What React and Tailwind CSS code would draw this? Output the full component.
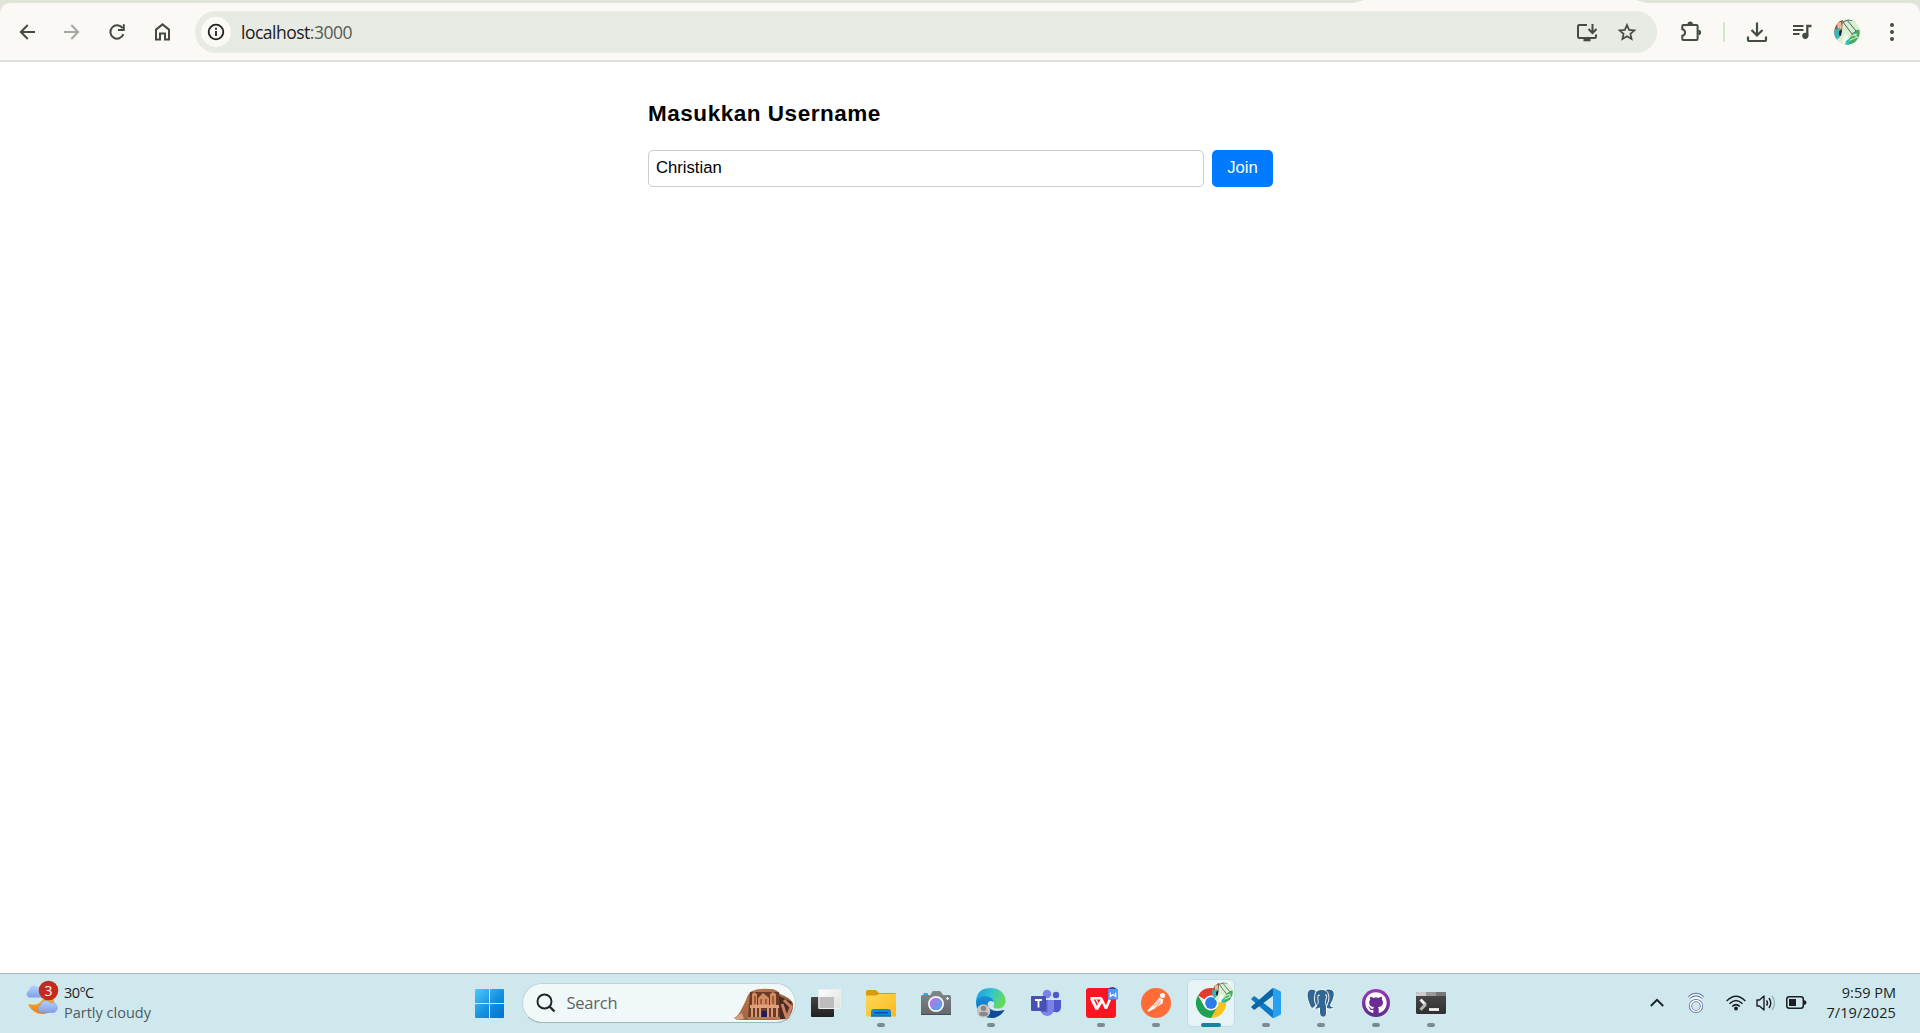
import React from "react";
import { FaGithub } from "react-icons/fa";

const INK = "#434b43";

function Back({ color = INK, flip = false }) {
  return (
    <svg width="16" height="16" viewBox="0 0 16 16" fill="none" stroke={color} strokeWidth="2" className={flip ? "-scale-x-100" : ""}>
      <path d="M16 8H2.200M8.700 1L1.900 8l6.800 7" />
    </svg>
  );
}

function Reload() {
  return (
    <svg width="18" height="18" viewBox="0 0 18 18" fill="none" stroke={INK} strokeWidth="2">
      <path d="M15.400 11.200A6.700 6.700 0 1 1 14.600 5.100" />
      <path d="M15.800 1.200V7H10" />
    </svg>
  );
}

function Home() {
  return (
    <svg width="18" height="20" viewBox="0 0 18 20" fill="none" stroke={INK} strokeWidth="2">
      <path d="M3 7.600L9.500 2.400l6.500 5.200V17.500H12V11.500H7V17.500H3Z" />
    </svg>
  );
}

function InstallApp() {
  return (
    <svg width="22" height="20" viewBox="0 0 22 20" fill="none" stroke={INK} strokeWidth="2">
      <path d="M11 3H3.200Q2 3 2 4.200V14.800Q2 16 3.200 16H18.800Q20 16 20 14.800V12.500" />
      <path d="M16.500 2V10.500M12.500 7L16.500 11L20.500 7" />
      <path d="M7.500 18H14.500" strokeWidth="2.600" />
    </svg>
  );
}

function Star() {
  return (
    <svg width="20" height="20" viewBox="0 0 20 20" fill="none" stroke={INK} strokeWidth="1.700">
      <path d="M10 3l2.100 4.900 5.300.45-4 3.500 1.200 5.200L10 14.300l-4.600 2.750 1.200-5.200-4-3.500 5.300-.45z" />
    </svg>
  );
}

function Puzzle() {
  return (
    <svg width="22" height="22" viewBox="0 0 22 22" fill="none" stroke={INK} strokeWidth="2">
      <path d="M3.400 4H16.500Q17.600 4 17.600 5.100V17.900Q17.600 19 16.500 19H3.400Q2.300 19 2.300 17.900V14.800C6 14 6 9 2.300 8.200V5.100Q2.300 4 3.400 4Z" />
      <path d="M7.500 3.200a2.700 2.700 0 0 1 5.400 0zM18.400 8.800a2.700 2.700 0 0 1 0 5.400z" fill={INK} stroke="none" />
    </svg>
  );
}

function Download() {
  return (
    <svg width="22" height="22" viewBox="0 0 22 22" fill="none" stroke={INK} strokeWidth="2.200">
      <path d="M11 1.500V14M5.500 9L11 14.500L16.500 9" />
      <path d="M2 15.500V18.500Q2 20 3.500 20H18.500Q20 20 20 18.500V15.500" />
    </svg>
  );
}

function MediaQueue() {
  return (
    <svg width="22" height="18" viewBox="0 0 22 18" fill="none" stroke={INK} strokeWidth="2">
      <path d="M2 3H12.500M2 7H12.500M2 11H8.500" />
      <path d="M16.300 13V3H20.500" strokeWidth="2.300" />
      <circle cx="14.300" cy="12.800" r="3.100" fill={INK} stroke="none" />
    </svg>
  );
}

function Avatar({ size = 26, id = "av" }) {
  return (
    <svg width={size} height={size} viewBox="0 0 26 26">
      <defs><clipPath id={id}><circle cx="13" cy="13" r="12.700" /></clipPath></defs>
      <g clipPath={`url(#${id})`}>
        <rect width="26" height="26" fill="#d9efd0" />
        <path d="M0 0H9L8 12L5 19L0 18Z" fill="#8b5a43" />
        <path d="M3 4l4-1 1 6-4 3z" fill="#e9b79a" />
        <path d="M0 11l6-2 1 6-4 6-3-3z" fill="#35b9b6" />
        <path d="M5 12l3-1-1 6-2-1z" fill="#15233c" />
        <path d="M17 16L26 10V26H13Z" fill="#4aa860" />
        <path d="M15 18l8-3M14 22l9-4M18 13l6 6" stroke="#b9ecc0" strokeWidth="1.300" />
        <path d="M10 15l4 1-1 10-5-1z" fill="#f3fbe8" />
        <path d="M9 3l9 12 6-4M13 1l9 11M9 3l5-2 10 1" fill="none" stroke="#3c6a5c" strokeWidth="1" />
        <path d="M12 22l4-3-1 7h-4z" fill="#2fc0bd" />
      </g>
    </svg>
  );
}

function Cell({ children }) {
  return <div className="flex h-full w-[45px] shrink-0 items-center justify-center pt-px pr-px">{children}</div>;
}

function Toolbar() {
  return (
    <header className="shrink-0 bg-[#dfe5d9]">
      <div className="flex h-[3px] justify-end pr-[274px]">
        <div className="h-[3px] w-[292px] bg-[#faf9f5] [clip-path:polygon(10px_0,282px_0,292px_3px,0_3px)]" />
      </div>
      <div className="flex h-[59px] items-center rounded-t-[10px] border-b-2 border-[#e0e1dd] bg-[#faf9f5] pl-[5px]">
        <Cell><Back /></Cell>
        <Cell><Back color="#a5a8a2" flip /></Cell>
        <Cell><Reload /></Cell>
        <Cell><Home /></Cell>
        <div className="mt-px ml-[10px] flex h-[42px] w-[1462px] shrink-0 items-center rounded-full bg-[#e8eae4] pl-[6px]">
          <div className="flex size-[30px] items-center justify-center rounded-full bg-[#faf9f5]">
            <svg width="18" height="18" viewBox="0 0 18 18" fill="none" stroke="#1f2320" strokeWidth="1.800">
              <circle cx="9" cy="9" r="7.300" />
              <path d="M9 8V13M9 4.800V6.700" />
            </svg>
          </div>
          <div className="mt-px ml-[10px] whitespace-nowrap font-['Open_Sans','Noto_Sans',sans-serif] text-[17.5px] tracking-[-0.5px] text-[#1c201c]">
            localhost<span className="text-[#555b55]">:3000</span>
          </div>
          <div className="ml-auto flex items-center gap-[19px] pr-[20px]"><InstallApp /><Star /></div>
        </div>
        <div className="ml-[12px]"><Cell><Puzzle /></Cell></div>
        <div className="mr-[10px] ml-[9px] h-[20px] w-[2px] shrink-0 rounded bg-[#d5e3cf]" />
        <Cell><Download /></Cell>
        <Cell><MediaQueue /></Cell>
        <Cell><Avatar /></Cell>
        <Cell>
          <div className="flex flex-col gap-[3px]">
            <i className="size-[4px] rounded-full bg-[#434b43]" />
            <i className="size-[4px] rounded-full bg-[#434b43]" />
            <i className="size-[4px] rounded-full bg-[#434b43]" />
          </div>
        </Cell>
      </div>
    </header>
  );
}

function JoinForm() {
  return (
    <main className="flex-1 bg-white pl-[648px] font-['Liberation_Sans',Arial,sans-serif] text-black">
      <div className="w-[625px] pt-[38px]">
        <h3 className="text-[22.5px] leading-[27px] font-bold tracking-[0.53px]">Masukkan Username</h3>
        <form className="mt-[23px] flex gap-[8px]">
          <input
            defaultValue="Christian"
            className="h-[37px] w-[556px] rounded-[5px] border border-[#ccc] bg-white px-[7px] pb-[2px] text-[16.67px] outline-none"
          />
          <button type="button" className="h-[37px] w-[61px] rounded-[5px] bg-[#007bff] pb-[2px] text-[16.67px] text-white">Join</button>
        </form>
      </div>
    </main>
  );
}

function Weather() {
  return (
    <svg width="36" height="36" viewBox="0 0 36 36">
      <defs>
        <linearGradient id="cl" x1="0" y1="0" x2="0" y2="1"><stop stopColor="#b9d0fb" /><stop offset="1" stopColor="#7fa1ea" /></linearGradient>
        <linearGradient id="mn" x1="0" y1="0" x2="0" y2="1"><stop stopColor="#ffb52b" /><stop offset="1" stopColor="#ef7d13" /></linearGradient>
      </defs>
      <path d="M28 16Q31 25 27 30Q21 36 12 33Q5 30 3 24Q13 27 18 19Z" fill="url(#mn)" />
      <path d="M4 17.500a3.700 3.700 0 0 1 0-7 5 5 0 0 1 9-3 5 5 0 0 1 6 5v5z" fill="url(#cl)" />
      <path d="M16 32.500a4 4 0 0 1-.5-7.500 5.500 5.500 0 0 1 10-2 4.700 4.700 0 0 1 3.500 9.500z" fill="url(#cl)" stroke="#7c98d8" strokeWidth=".6" />
      <circle cx="23.500" cy="10.500" r="9.800" fill="#c42b1c" />
      <text x="23.500" y="15.500" textAnchor="middle" fill="white" fontSize="14" fontFamily="Open Sans, sans-serif">3</text>
    </svg>
  );
}

function Petra() {
  return (
    <svg width="60" height="33" viewBox="0 0 60 33">
      <defs><linearGradient id="rock" x1="0" y1="0" x2="1" y2="1"><stop stopColor="#c18152" /><stop offset="1" stopColor="#8c4e30" /></linearGradient></defs>
      <path d="M0 30Q5 27 7 22L12 12Q14 5 18 3Q25 0 36 1Q43 1 46 6Q55 9 59 15Q60 24 53 31L40 32H3Z" fill="url(#rock)" />
      <path d="M0 30L8 25L10 31L3 32Z" fill="#dc9a82" />
      <path d="M16 4H45L47 31H14Z" fill="#6b3b27" />
      <path d="M45 8L58 14Q54 24 52 31H46Z" fill="#4b2a20" />
      <path d="M48 16l5 15M50 12l7 7-4 11" stroke="#c98166" strokeWidth="3" fill="none" />
      <path d="M18 17V6l2-2 3 2v11zM36 17V6l3-2 3 2v11zM24 17V10l5-5 6 5v7z" fill="#d38c62" />
      <path d="M21 8v8M39 8v8M27 11v5M32 11v5" stroke="#80452e" strokeWidth="1.300" />
      <path d="M16 17H45V20H16Z" fill="#e0a07a" />
      <path d="M18 20V30M22 20V30M26 20V30M34 20V30M38 20V30M43 20V30" stroke="#d99a7c" strokeWidth="2" />
      <path d="M27.500 23H33V30H27.500Z" fill="#231c55" />
      <path d="M14 29H46V31.500H14Z" fill="#bf7758" />
    </svg>
  );
}

function TaskView() {
  return (
    <svg width="30" height="30" viewBox="0 0 30 30">
      <defs>
        <linearGradient id="tvd" x1="0" y1="0" x2="0" y2="1"><stop stopColor="#454545" /><stop offset="1" stopColor="#202020" /></linearGradient>
        <linearGradient id="tvl" x1="0" y1="0" x2="1" y2="1"><stop stopColor="#fff" /><stop offset="1" stopColor="#dedede" /></linearGradient>
      </defs>
      <rect x="0" y="9" width="23" height="20" rx="1" fill="url(#tvd)" />
      <rect x="7.500" y="1" width="22.500" height="20" rx="1" fill="url(#tvl)" />
      <path d="M7.500 9H23V21H7.500Z" fill="#bdbdbd" />
      <rect x="8" y="1.500" width="21.500" height="19" rx=".8" fill="none" stroke="#ededed" />
    </svg>
  );
}

function Folder() {
  return (
    <svg width="30" height="30" viewBox="0 0 30 30">
      <defs><linearGradient id="fo" x1="0" y1="0" x2="1" y2="1"><stop stopColor="#ffd95b" /><stop offset="1" stopColor="#f9b81c" /></linearGradient></defs>
      <path d="M0 4Q0 2 2 2H9Q10.500 2 11.500 3.500L13 5H29Q30 5 30 6.500V10H0Z" fill="#dc9c08" />
      <path d="M0 7.500H10Q11.500 7.500 13 6H29Q30 6 30 7V28.500H1.500Q0 28.500 0 27.500Z" fill="url(#fo)" />
      <path d="M5 28.500V24Q5 21 8 21H22Q25 21 25 24V28.500Z" fill="#1687d6" />
      <path d="M5 27.500H25V28.500H5Z" fill="#0b61a6" />
      <path d="M9 24.800H21.500" stroke="#0a4f8d" strokeWidth="1.500" strokeLinecap="round" />
    </svg>
  );
}

function Camera() {
  return (
    <svg width="30" height="30" viewBox="0 0 30 30">
      <defs>
        <linearGradient id="ca" x1="0" y1="0" x2="0" y2="1"><stop stopColor="#83868b" /><stop offset="1" stopColor="#63666b" /></linearGradient>
        <linearGradient id="le" x1="0" y1="0" x2="1" y2="1"><stop offset=".15" stopColor="#b574e4" /><stop offset=".9" stopColor="#4aa9ef" /></linearGradient>
      </defs>
      <path d="M2.500 8V6Q2.500 5 3.500 5H6Q7 5 7 6V8Z" fill="#27a8e8" />
      <path d="M9 8L11 4Q11.500 3 13 3H18Q19.500 3 20 4L22 7H28.500Q30 7 30 8.500V27H0V8.500Q0 7 1.500 7H8.500Z" fill="url(#ca)" />
      <path d="M0 26H30V27H0Z" fill="#4c4f54" />
      <circle cx="15" cy="16" r="8" fill="#f5f6f8" />
      <circle cx="15" cy="16" r="6.300" fill="url(#le)" />
      <path d="M26.500 9V12M25 10.500H28" stroke="#eee" strokeWidth="1.200" />
    </svg>
  );
}

function Edge() {
  return (
    <svg width="30" height="30" viewBox="0 0 30 30">
      <defs>
        <linearGradient id="e1" x1="0" y1=".1" x2="1" y2=".5"><stop stopColor="#1a9be0" /><stop offset=".5" stopColor="#35c3cf" /><stop offset="1" stopColor="#66dd55" /></linearGradient>
        <linearGradient id="e2" x1="0" y1="0" x2="0" y2="1"><stop stopColor="#1591dc" /><stop offset="1" stopColor="#0d66b7" /></linearGradient>
      </defs>
      <path d="M0 13Q1 0 15 0Q24 0 28 7Q32 15 27 19Q23 21.500 18.500 20Q16.500 19 18 17Q19 13 15 11Q7 7 0 13Z" fill="url(#e1)" />
      <path d="M0 13Q4 7 11 8.200Q17 10 18 14Q13 11 11.500 16Q10 24 19 29.500Q17 30 14 30Q0 28 0 13Z" fill="url(#e2)" />
      <path d="M11.500 16Q13 25.500 28 22Q29 21.700 28 23Q23 30 16 30Q8 26 11.500 16Z" fill="#124a96" />
      <circle cx="7.500" cy="23" r="6.800" fill="#c9c7c5" />
      <circle cx="7.500" cy="20.500" r="2.700" fill="#8a8886" />
      <path d="M3 27Q3 24 5 24H10Q12 24 12 27Q7.500 29.500 3 27Z" fill="#8a8886" />
    </svg>
  );
}

function Teams() {
  return (
    <svg width="30" height="30" viewBox="0 0 30 30">
      <circle cx="25" cy="7" r="3.200" fill="#5059c9" />
      <path d="M21 12H30V20Q29 25 24 24H21Z" fill="#5059c9" />
      <circle cx="16" cy="6" r="4.300" fill="#7b83eb" />
      <path d="M9 12H23V21Q22 28 16 28Q10 27 9 21Z" fill="#7b83eb" />
      <path d="M9 12H16.500V24H10Z" fill="#5b63c7" />
      <rect x="0" y="8" width="15" height="15" rx="1" fill="#4850b5" />
      <path d="M4 12H11M7.500 12V19.500" stroke="white" strokeWidth="1.800" />
    </svg>
  );
}

function Wps() {
  return (
    <svg width="32" height="34" viewBox="0 0 32 34">
      <rect x="0" y="2" width="30" height="30" rx="3" fill="#fc1420" />
      <path d="M4.500 12.200H15L20 22.500L23.800 13.500" fill="none" stroke="white" strokeWidth="2.600" strokeLinejoin="bevel" />
      <path d="M5.500 12.500L10.800 23L15.800 14.500" fill="none" stroke="white" strokeWidth="3" strokeLinejoin="bevel" />
      <path d="M10 13.500L12.500 18" stroke="white" strokeWidth="1.200" />
      <path d="M22 3Q26-1 31 3V6H22Z" fill="#2f5486" />
      <rect x="22" y="3" width="10" height="10.500" rx="1" fill="#5096ff" />
      <path d="M24.300 6.500V10.500L27 8.500L29.700 10.500V6.500" fill="none" stroke="white" strokeWidth="1.200" />
    </svg>
  );
}

function Postman() {
  return (
    <svg width="30" height="30" viewBox="0 0 30 30">
      <circle cx="15" cy="15" r="15" fill="#ff6c37" />
      <circle cx="21.500" cy="7.500" r="2.500" fill="#fff" />
      <path d="M18.500 9.500L22 11.500L20 16.500L15.500 19L12 20.500L12.500 16.500Z" fill="#ffe9df" />
      <path d="M12.500 17.500L7 23L14 19.500M21.500 11L20.500 16" fill="none" stroke="white" strokeWidth="1.600" />
      <path d="M14 17.500l5-5M16 18l3.500-4" stroke="#ff8d64" strokeWidth=".9" />
    </svg>
  );
}

function Chrome() {
  return (
    <svg width="30" height="30" viewBox="0 0 30 30">
      <path d="M2 7.500A15 15 0 0 1 28 7.500L15 15Z" fill="#e33b2e" />
      <path d="M28 7.500A15 15 0 0 1 15 30L21.500 18.750L15 7.500Z" fill="#fbc116" />
      <path d="M2 7.500A15 15 0 0 0 15 30L21.500 18.750H8.500Z" fill="#22a052" />
      <circle cx="15" cy="15" r="7.500" fill="white" />
      <circle cx="15" cy="15" r="5.900" fill="#2b7de9" />
    </svg>
  );
}

function VsCode() {
  return (
    <svg width="30" height="30" viewBox="0 0 30 30">
      <path d="M0.500 10.500L2.500 8.500Q3.200 8 4 8.500L23 23V30L21 29.500L0.700 11.800Q0 11 .5 10.500Z" fill="#0f7ac6" />
      <path d="M0.500 19.500L2.500 21.500Q3.200 22 4 21.500L23 7V0L21 .5L0.700 18.200Q0 19 .5 19.500Z" fill="#0a66a8" />
      <path d="M20.500.8Q22 0 23.500.3L29 3Q30 3.500 30 4.700V25.300Q30 26.500 29 27L23.500 29.700Q22 30 20.500 29.200Q22 29.300 22 27.700V2.300Q22 .7 20.500.8Z" fill="#26a1ef" />
    </svg>
  );
}

function Postgres() {
  return (
    <svg width="30" height="30" viewBox="0 0 30 30" fill="#336791" stroke="#f4fafc" strokeWidth="1" strokeLinejoin="round">
      <path d="M18 2Q24-.5 27.500 3Q30 7 24.500 17Q24 19 28.500 19Q26 22 21 20.500L18 16Z" />
      <path d="M10 2.500Q5-.5 2 3Q-.5 7 3.500 17Q6 22.500 8.500 19L11.500 15Z" />
      <path d="M9.500 4Q14-.5 20 2.500Q24 6 22.500 13L20.500 18.500V26Q20 29.500 17 29.300Q13.500 29 13.500 25V20Q10 22.500 7.500 20Q10 20 10.500 18Q7 13 9.500 4Z" />
      <path d="M9.800 17.500Q13 16 12 12Q11.500 9 12 7.500M20.500 18.500Q18.500 14 20 11Q21 9 20.500 7" fill="none" strokeWidth=".9" />
      <path d="M12 7.300h1.600M19.300 7h1.200" fill="none" strokeWidth="1.300" />
    </svg>
  );
}

function GithubDesktop() {
  return (
    <div className="flex size-[28px] items-center justify-center rounded-full bg-linear-to-b from-[#9a37b8] to-[#5b2d8e]">
      <div className="flex size-[20px] items-center justify-center rounded-full bg-[#6d2c94]"><FaGithub size={22} color="#fff" className="shrink-0" /></div>
    </div>
  );
}

function Terminal() {
  return (
    <svg width="30" height="30" viewBox="0 0 30 30">
      <defs><linearGradient id="te" x1="0" y1="0" x2="0" y2="1"><stop stopColor="#4b4b4b" /><stop offset="1" stopColor="#303030" /></linearGradient></defs>
      <rect x="0" y="4" width="30" height="22" rx="1.500" fill="url(#te)" />
      <path d="M1.500 4H10V8H0V5.500Q0 4 1.500 4Z" fill="#cccccc" />
      <path d="M10 4H20V8H10Z" fill="#9a9a9a" />
      <path d="M20 4H28.500Q30 4 30 5.500V8H20Z" fill="#777" />
      <path d="M4.500 11.500L9.500 16.700" stroke="#f0f0f0" strokeWidth="3" />
      <path d="M9.800 16.300L4.500 21.800" stroke="#b9b9b9" strokeWidth="3" />
      <path d="M13 21.500H23" stroke="#f2f2f2" strokeWidth="2.800" />
    </svg>
  );
}

function TaskItem({ children, running }) {
  return (
    <div className="relative flex h-[58px] w-[55px] items-center justify-center">
      {children}
      {running && <i className="absolute bottom-[5px] left-[23.5px] h-[4px] w-[8px] rounded-full bg-[#7b8b90]" />}
    </div>
  );
}

function Taskbar() {
  return (
    <footer className="flex h-[60px] shrink-0 border-t border-[#a7b9bf] bg-[#cee8ee] font-['Open_Sans','Noto_Sans',sans-serif] text-[#1b1f21]">
      <div className="flex w-[475px] pt-[5px] pl-[25px]">
        <div className="mt-px"><Weather /></div>
        <div className="ml-[3px] pt-[4px] text-[14.5px] leading-[20px]">
          <div className="tracking-[-0.6px]">30°C</div>
          <div className="text-[#4d5c62]">Partly cloudy</div>
        </div>
      </div>
      <div className="flex h-[58px] items-center">
        <svg width="29" height="30" viewBox="0 -1 29 30">
          <defs><linearGradient id="wi" x1="0" y1="0" x2="1" y2="1"><stop stopColor="#4cc9fb" /><stop offset=".55" stopColor="#1490df" /><stop offset="1" stopColor="#0270cc" /></linearGradient></defs>
          <path d="M1 0H14V14H0V1Q0 0 1 0ZM15 0H28Q29 0 29 1V14H15ZM0 15H14V29H1Q0 29 0 28ZM15 15H29V28Q29 29 28 29H15Z" fill="url(#wi)" />
        </svg>
        <div className="ml-[17.5px] flex h-[40px] w-[274px] items-center rounded-full border border-[#bdd5dc] border-b-[#9fb5bc] bg-[#f0f8fa] pl-[13px]">
          <svg width="20" height="20" viewBox="0 0 20 20" fill="none" stroke="#23292b" strokeWidth="2"><circle cx="8.500" cy="8.500" r="7" /><path d="M13.500 13.500L18.500 18.500" strokeWidth="2.400" /></svg>
          <span className="ml-[11px] text-[16.5px] tracking-[-0.25px] text-[#5b6468]">Search</span>
          <div className="mt-[2px] mr-[1px] ml-auto"><Petra /></div>
        </div>
        <div className="ml-[3px] flex">
          <TaskItem><TaskView /></TaskItem>
          <TaskItem running><Folder /></TaskItem>
          <TaskItem><Camera /></TaskItem>
          <TaskItem running><Edge /></TaskItem>
          <TaskItem><Teams /></TaskItem>
          <TaskItem running><div className="-mr-[2px]"><Wps /></div></TaskItem>
          <TaskItem running><Postman /></TaskItem>
          <div className="flex h-[58px] w-[55px] items-center justify-center">
            <div className="relative flex h-[48px] w-[48px] items-center justify-center rounded-[6px] border border-[#c3dce2] bg-[#e6f3f7]">
              <Chrome />
              <div className="absolute top-[2px] left-[24px]"><Avatar size={21} id="av2" /></div>
              <i className="absolute -bottom-px left-[13px] h-[4px] w-[20px] rounded-full bg-[#16849b]" />
            </div>
          </div>
          <TaskItem running><VsCode /></TaskItem>
          <TaskItem running><Postgres /></TaskItem>
          <TaskItem running><GithubDesktop /></TaskItem>
          <TaskItem running><Terminal /></TaskItem>
        </div>
      </div>
      <div className="ml-auto flex h-[57px] items-center pr-[24px]">
        <svg width="14" height="9" viewBox="0 0 14 9" fill="none" stroke="#1b1f21" strokeWidth="1.800"><path d="M.8 8L7 1.800L13.200 8" /></svg>
        <svg className="ml-[23px]" width="18" height="22" viewBox="0 0 18 22" fill="none">
          <g stroke="#5d6fa5" strokeWidth="3.200"><circle cx="9" cy="14" r="5.500" /><path d="M2 5.500Q9-.5 16 5.500" /></g>
          <g stroke="#fff" strokeWidth="1.500"><circle cx="9" cy="14" r="5.500" /><path d="M2 5.500Q9-.5 16 5.500M4 7.500Q9 4 14 7.500" /></g>
        </svg>
        <svg className="ml-[21px]" width="20" height="16" viewBox="0 0 20 16" fill="none" stroke="#1b1f21" strokeWidth="1.500">
          <path d="M.7 6Q10-3.500 19.300 6M3.500 8.800Q10 2.200 16.500 8.800M6.200 11.500Q10 7.800 13.800 11.500" /><circle cx="10" cy="13.500" r="1.900" fill="#1b1f21" stroke="none" />
        </svg>
        <svg className="ml-[10px]" width="20" height="18" viewBox="0 0 20 18" fill="none" stroke="#1b1f21" strokeWidth="1.400">
          <path d="M1 6H3.500L8 2V16L3.500 12H1Z" strokeLinejoin="round" /><path d="M10.500 6.300Q12.500 9 10.500 11.700M13 4Q16.500 9 13 14" /><path d="M16 2Q21 9 16 16" stroke="#9db2b9" />
        </svg>
        <svg className="ml-[10px]" width="21" height="13" viewBox="0 0 21 13">
          <rect x=".8" y=".8" width="16.500" height="11.400" rx="2.500" fill="none" stroke="#1b1f21" strokeWidth="1.500" /><rect x="3" y="3" width="7" height="7" fill="#1b1f21" /><path d="M18 4Q20.500 4.500 20.500 6.500T18 9Z" fill="#1b1f21" />
        </svg>
        <div className="ml-[14px] w-[75px] text-right text-[14.5px] leading-[20px] whitespace-nowrap">
          <div className="tracking-[0px]">9:59 PM</div>
          <div className="tracking-[0.1px]">7/19/2025</div>
        </div>
      </div>
    </footer>
  );
}

export default function App() {
  return (
    <div className="flex h-[1033px] w-[1920px] flex-col overflow-hidden">
      <Toolbar />
      <JoinForm />
      <Taskbar />
    </div>
  );
}
